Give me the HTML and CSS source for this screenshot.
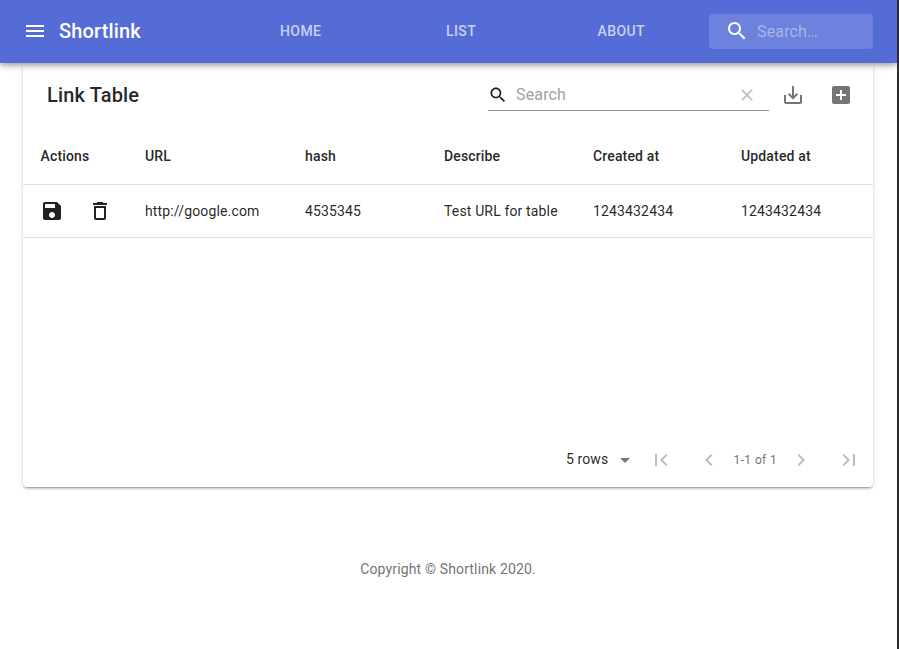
FILE: index.html
```html
<!DOCTYPE html>
<html lang="en">
<head>
<meta charset="utf-8">
<title>Shortlink</title>
<link rel="stylesheet" href="styles.css">
</head>
<body>
<header class="appbar">
  <svg class="icon menu" viewBox="0 0 24 24"><path d="M3 18h18v-2H3v2zm0-5h18v-2H3v2zm0-7v2h18V6H3z"/></svg>
  <div class="brand">Shortlink</div>
  <nav class="nav">
    <a class="nav-home">HOME</a>
    <a class="nav-list">LIST</a>
    <a class="nav-about">ABOUT</a>
  </nav>
  <div class="appsearch">
    <svg class="icon" viewBox="0 0 24 24"><path d="M15.5 14h-.79l-.28-.27C15.41 12.59 16 11.11 16 9.5 16 5.91 13.09 3 9.5 3S3 5.91 3 9.5 5.91 16 9.5 16c1.61 0 3.09-.59 4.23-1.57l.27.28v.79l5 4.99L20.49 19l-4.99-5zm-6 0C7.01 14 5 11.99 5 9.5S7.01 5 9.5 5 14 7.01 14 9.5 11.99 14 9.5 14z"/></svg>
    <span>Search…</span>
  </div>
</header>
<main class="card">
  <div class="toolbar">
    <h1>Link Table</h1>
    <div class="field">
      <svg class="icon small" viewBox="0 0 24 24"><path d="M15.5 14h-.79l-.28-.27C15.41 12.59 16 11.11 16 9.5 16 5.91 13.09 3 9.5 3S3 5.91 3 9.5 5.91 16 9.5 16c1.61 0 3.09-.59 4.23-1.57l.27.28v.79l5 4.99L20.49 19l-4.99-5zm-6 0C7.01 14 5 11.99 5 9.5S7.01 5 9.5 5 14 7.01 14 9.5 11.99 14 9.5 14z"/></svg>
      <span>Search</span>
      <svg class="icon small clear" viewBox="0 0 24 24"><path d="M19 6.41L17.59 5 12 10.59 6.41 5 5 6.41 10.59 12 5 17.59 6.41 19 12 13.41 17.59 19 19 17.59 13.41 12z"/></svg>
    </div>
    <svg class="icon tool" viewBox="0 0 24 24"><path d="M19 12v7H5v-7H3v7c0 1.1.9 2 2 2h14c1.1 0 2-.9 2-2v-7h-2zm-6 .67l2.59-2.58L17 11.5l-5 5-5-5 1.41-1.41L11 12.67V3h2v9.670z"/></svg>
    <svg class="icon tool" viewBox="0 0 24 24"><path d="M19 3H5c-1.110 0-2 .9-2 2v14c0 1.100.89 2 2 2h14c1.100 0 2-.9 2-2V5c0-1.100-.9-2-2-2zm-2 10h-4v4h-2v-4H7v-2h4V7h2v4h4v2z"/></svg>
  </div>
  <div class="row head">
    <div>Actions</div><div>URL</div><div>hash</div><div>Describe</div><div>Created at</div><div>Updated at</div>
  </div>
  <div class="row">
    <div class="actions">
      <svg class="icon" viewBox="0 0 24 24"><path d="M17 3H5c-1.110 0-2 .9-2 2v14c0 1.100.89 2 2 2h14c1.100 0 2-.9 2-2V7l-4-4zm-5 16c-1.660 0-3-1.340-3-3s1.340-3 3-3 3 1.340 3 3-1.340 3-3 3zm3-10H5V5h10v4z"/></svg>
      <svg class="icon" viewBox="0 0 24 24"><path d="M6 19c0 1.100.9 2 2 2h8c1.100 0 2-.9 2-2V7H6v12zM8 9h8v10H8V9zm7.500-5l-1-1h-5l-1 1H5v2h14V4z"/></svg>
    </div>
    <div>http://google.com</div><div>4535345</div><div>Test URL for table</div><div>1243432434</div><div>1243432434</div>
  </div>
  <div class="pager">
    <span class="rows">5 rows</span>
    <svg class="icon caret" viewBox="0 0 24 24"><path d="M7 10l5 5 5-5z"/></svg>
    <svg class="icon first" viewBox="0 0 24 24"><path d="M18.410 16.590L13.820 12l4.590-4.590L17 6l-6 6 6 6zM6 6h2v12H6z"/></svg>
    <svg class="icon prev" viewBox="0 0 24 24"><path d="M15.410 7.410L14 6l-6 6 6 6 1.410-1.410L10.830 12z"/></svg>
    <span class="range">1-1 of 1</span>
    <svg class="icon next" viewBox="0 0 24 24"><path d="M10 6L8.590 7.410 13.170 12l-4.580 4.590L10 18l6-6z"/></svg>
    <svg class="icon last" viewBox="0 0 24 24"><path d="M5.590 7.410L10.180 12l-4.590 4.590L7 18l6-6-6-6zM16 6h2v12h-2z"/></svg>
  </div>
</main>
<footer class="copyright">Copyright © Shortlink 2020.</footer>
</body>
</html>
```
FILE: styles.css
```css
* { box-sizing: border-box; }
html { background: #fff; }
body {
  margin: 0;
  height: 649px;
  overflow: hidden;
  border-right: 2px solid #2d2d2d;
  background: #fff;
  color: rgba(0, 0, 0, 0.87);
  font: 14px/20px Roboto, sans-serif;
}
.icon { width: 24px; height: 24px; flex: none; fill: currentColor; display: block; }
.small { width: 20px; height: 20px; }
.appbar {
  position: relative;
  z-index: 1;
  display: flex;
  align-items: center;
  height: 63px;
  padding: 0 24px 0 23px;
  background: #556cd6;
  color: #fff;
  box-shadow: 0 2px 4px -1px rgba(0,0,0,.2), 0 4px 5px rgba(0,0,0,.14), 0 1px 10px rgba(0,0,0,.12);
}
.menu, .brand, .nav { margin-bottom: 1px; }
.brand { width: 221px; margin-left: 12px; font-size: 20px; font-weight: 500; letter-spacing: .15px; }
.nav {
  display: grid;
  grid-template-columns: 166px 151.500px 1fr;
  width: 429px;
  font-weight: 500;
  letter-spacing: .4px;
  color: rgba(255,255,255,.7);
}
.appsearch {
  display: flex;
  align-items: center;
  width: 164px;
  height: 35px;
  padding: 0 16px;
  border-radius: 4px;
  background: rgba(255,255,255,.15);
  font-size: 16px;
}
.appsearch .icon { position: relative; top: -1px; }
.appsearch span { margin-left: 8px; color: rgba(255,255,255,.42); letter-spacing: .15px; }
.card {
  width: 850px;
  height: 424px;
  margin-left: 23px;
  border-radius: 4px;
  display: flex;
  flex-direction: column;
  box-shadow: 0 3px 1px -2px rgba(0,0,0,.2), 0 2px 2px rgba(0,0,0,.14), 0 1px 5px rgba(0,0,0,.12);
}
.toolbar { display: flex; align-items: center; height: 65px; padding: 0 20px 2px 24px; }
.toolbar h1 { margin: 0; width: 441px; font-size: 20px; font-weight: 500; letter-spacing: .15px; }
.field {
  display: flex;
  align-items: center;
  width: 281px;
  height: 32px;
  padding-top: 1px;
  border-bottom: 1px solid #949494;
  font-size: 16px;
}
.field span { margin-left: 8px; flex: 1; color: #a2a2a2; letter-spacing: .15px; }
.clear { margin-right: 12px; color: #bdbdbd; }
.tool { margin-left: 12px; color: #757575; }
.tool + .tool { margin-left: 24px; }
.row {
  display: grid;
  grid-template-columns: 104px 160px 139px 149px 148px 1fr;
  align-items: center;
  height: 53px;
  padding-left: 18px;
  border-bottom: 1px solid #e0e0e0;
  letter-spacing: .15px;
}
.head { height: 57px; font-weight: 500; }
.head div:first-child { margin-left: -.4px; }
.actions { display: flex; gap: 24px; margin-left: -1px; }
.pager { display: flex; align-items: center; height: 54px; margin-top: auto; padding-left: 543px; }
.rows { width: 42px; margin-bottom: 2px; letter-spacing: .1px; white-space: nowrap; }
.caret { margin-left: 5px; color: #757575; }
.pager .first, .pager .prev, .pager .next, .pager .last { color: #bdbdbd; }
.first { margin-left: 12px; }
.prev { margin-left: 24px; }
.range { width: 43.500px; margin-left: 12.500px; color: #757575; font-size: 12px; letter-spacing: .4px; white-space: nowrap; }
.next { margin-left: 12px; }
.last { margin-left: 24px; }
.copyright { margin-top: 72px; padding-right: 1px; text-align: center; color: #757575; letter-spacing: .15px; }
```
